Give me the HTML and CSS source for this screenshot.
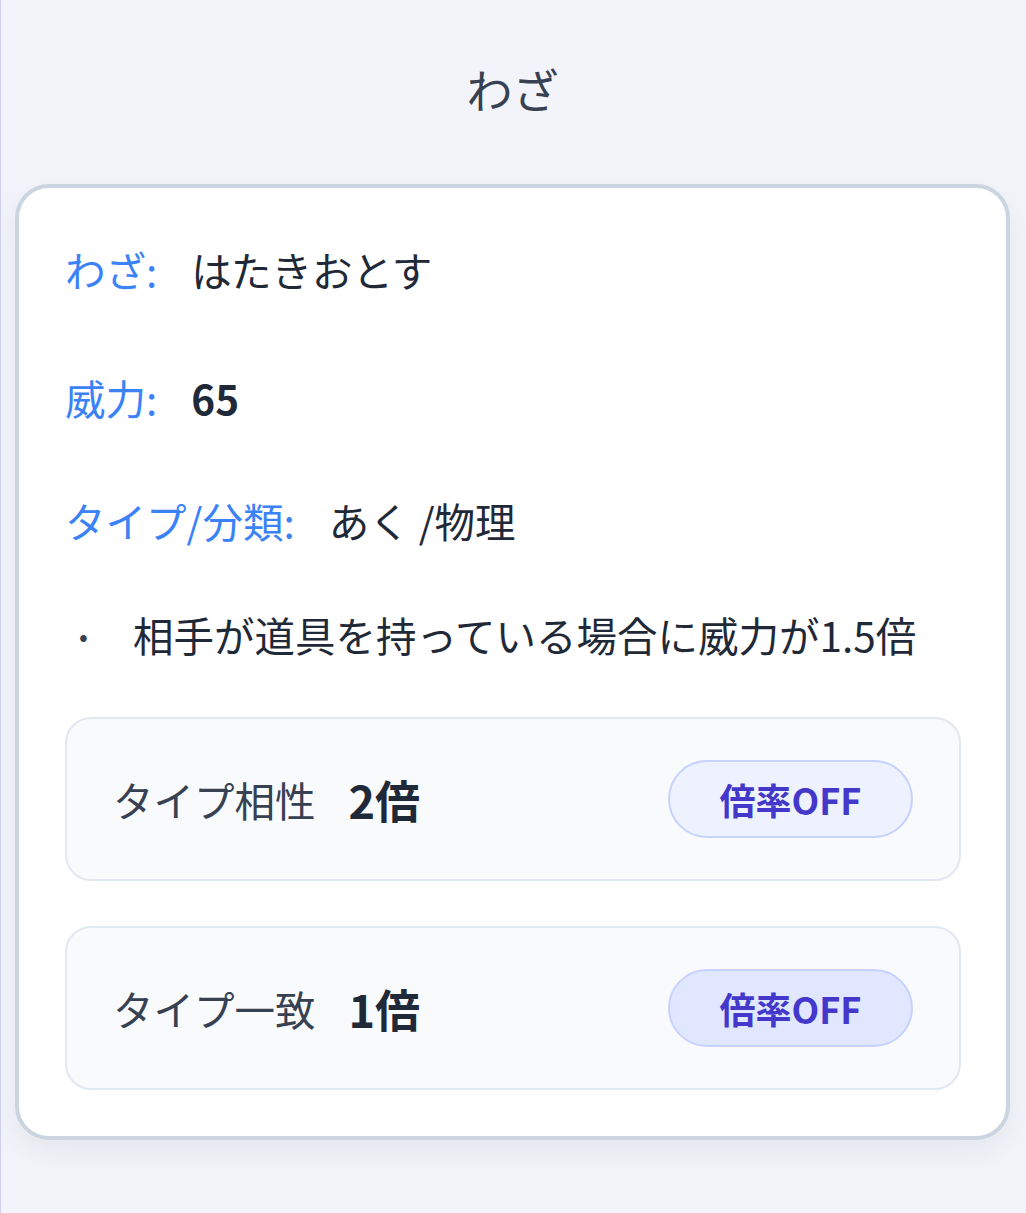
FILE: index.html
```html
<!DOCTYPE html>
<html lang="ja">
<head>
<meta charset="utf-8">
<title>わざ</title>
<link rel="stylesheet" href="styles.css">
</head>
<body>
<div class="page">
  <h1 class="title">わざ</h1>
  <section class="card">
    <div class="row row-move">
      <span class="label">わざ:</span>
      <span class="value">はたきおとす</span>
    </div>
    <div class="row row-power">
      <span class="label">威力:</span>
      <span class="value value-bold">65</span>
    </div>
    <div class="row row-type">
      <span class="label">タイプ/分類:</span>
      <span class="value">あく /物理</span>
    </div>
    <ul class="notes">
      <li class="note"><span class="dot">•</span><span>相手が道具を持っている場合に威力が1.5倍</span></li>
    </ul>
    <div class="box">
      <div class="box-text">
        <span class="box-label">タイプ相性</span>
        <span class="box-value">2倍</span>
      </div>
      <button class="toggle toggle-light">倍率OFF</button>
    </div>
    <div class="box box-second">
      <div class="box-text">
        <span class="box-label">タイプ一致</span>
        <span class="box-value">1倍</span>
      </div>
      <button class="toggle toggle-strong">倍率OFF</button>
    </div>
  </section>
</div>
</body>
</html>
```

FILE: styles.css
```css
html, body {
  margin: 0;
  padding: 0;
}
body {
  background: #f3f4f9;
  min-height: 100vh;
  box-shadow: inset 1px 0 0 #cfd0f4;
  font-family: "Noto Sans CJK JP", "Noto Sans", sans-serif;
  color: #1f2937;
}
.page {
  padding: 0 16px 0 15px;
}
.title {
  margin: 0;
  padding: 52px 0 60px;
  font-size: 46px;
  line-height: 72px;
  font-weight: 400;
  text-align: center;
  color: #374151;
}
.card {
  background: #ffffff;
  border: 4px solid #cbd5e1;
  border-radius: 34px;
  padding: 51px 45px 46px 46px;
  box-shadow: 0 12px 30px rgba(100, 116, 139, 0.10);
}
.row {
  display: flex;
  align-items: center;
  gap: 34px;
  height: 60px;
  font-size: 40.5px;
}
.row-power { margin-top: 68px; }
.row-type { margin-top: 63px; }
.label {
  color: #3b82f6;
}
.value {
  color: #1f2937;
}
.value-bold {
  font-weight: 700;
}
.notes {
  list-style: none;
  margin: 54px 0 0;
  padding: 0;
}
.note {
  display: flex;
  align-items: center;
  height: 60px;
  font-size: 40.5px;
  color: #1f2937;
}
.dot {
  width: 68px;
  padding-left: 14px;
  box-sizing: border-box;
  font-size: 26px;
  color: #374151;
}
.box {
  margin-top: 53px;
  display: flex;
  align-items: center;
  justify-content: space-between;
  background: #f8fafc;
  border: 2px solid #e2e8f0;
  border-radius: 26px;
  padding: 41px 46px 41px 46px;
}
.box-second {
  margin-top: 45px;
}
.box-text {
  display: flex;
  align-items: center;
  gap: 33px;
}
.box-label {
  font-size: 40.5px;
  color: #374151;
}
.box-value {
  font-size: 45px;
  font-weight: 700;
  color: #1f2937;
}
.toggle {
  font-family: "Noto Sans CJK JP", "Noto Sans", sans-serif;
  width: 245px;
  height: 78px;
  border-radius: 39px;
  border: 2px solid #c7d2fe;
  font-size: 36px;
  font-weight: 700;
  color: #4338ca;
  padding: 0;
  display: flex;
  align-items: center;
  justify-content: center;
}
.toggle-light {
  background: #eef2ff;
}
.toggle-strong {
  background: #e0e7ff;
}
```
